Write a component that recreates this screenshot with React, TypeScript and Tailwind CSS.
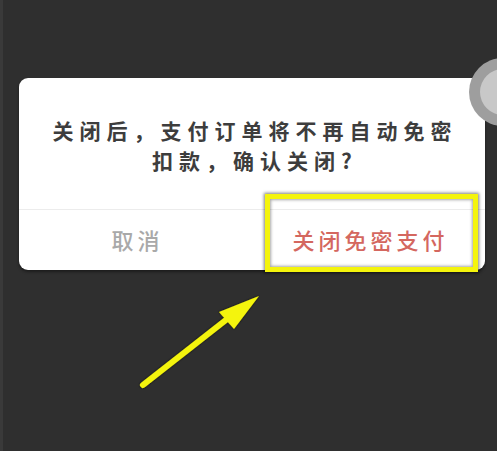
import React from "react";

export default function App() {
  const font = { fontFamily: '"Noto Sans CJK SC", "Noto Sans", sans-serif' };
  return (
    <div
      className="relative w-[497px] h-[451px] overflow-hidden bg-[#2f2f2f] border-l-[3px] border-l-[#3a3a3a]"
      style={font}
    >
      <div className="pt-[78px] pl-[16px]">
        <div className="w-[466px] h-[192px] bg-white rounded-[9px] flex flex-col shadow-[0_2px_3px_rgba(0,0,0,0.4)]">
          <div className="h-[131px] pt-[37px] flex flex-col items-center text-[21px] leading-[30px] font-semibold text-[#3d3d3d] tracking-[6px]">
            <div className="pl-[6px]">关闭后，支付订单将不再自动免密</div>
            <div className="pl-[6px]">扣款，确认关闭?</div>
          </div>
          <div className="flex-1 border-t border-t-[#ececec] flex">
            <div className="flex-1 flex items-center justify-center text-[22px] tracking-[4px] pl-[4px] text-[#a9a9a9] font-medium pb-[1px]">
              取消
            </div>
            <div className="flex-1 flex items-center justify-center text-[22px] tracking-[4px] pl-[4px] text-[#d4675f] font-medium pb-[1px]">
              关闭免密支付
            </div>
          </div>
        </div>
      </div>

      {/* highlight box */}
      <div className="absolute left-[262px] top-[194px] w-[213px] h-[78px] border-[5px] border-[#f4f40c] shadow-[0_0_3px_1px_rgba(0,0,0,0.5),inset_0_0_3px_1px_rgba(0,0,0,0.35)]" />

      {/* corner circle */}
      <div className="absolute left-[466px] top-[58px] w-[68px] h-[68px] rounded-full border-[11px] border-[rgba(130,130,130,0.6)] bg-[#c8c8c8]" />

      {/* arrow */}
      <svg
        className="absolute left-0 top-0"
        width="497"
        height="451"
        viewBox="0 0 497 451"
      >
        <defs>
          <filter id="sh" x="-20%" y="-20%" width="140%" height="140%">
            <feDropShadow dx="0" dy="0" stdDeviation="1.2" floodColor="#000" floodOpacity="0.8" />
          </filter>
        </defs>
        <g filter="url(#sh)">
          <line
            x1="140"
            y1="385"
            x2="228"
            y2="316"
            stroke="#f4f40c"
            strokeWidth="6"
            strokeLinecap="round"
          />
          <polygon points="256,296 216,312 231,329" fill="#f4f40c" />
        </g>
      </svg>
    </div>
  );
}
